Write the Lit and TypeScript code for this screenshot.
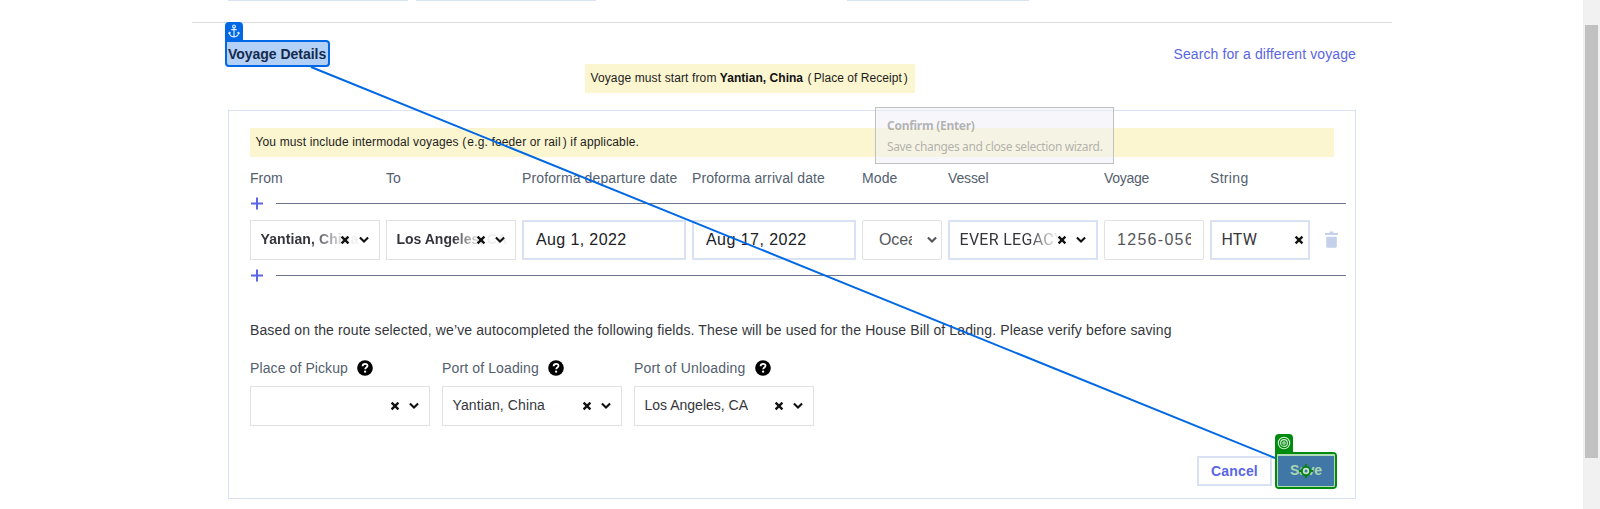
import { LitElement, html, css, svg, nothing } from "lit";
import { customElement } from "lit/decorators.js";

const ls = (n: number) => `letter-spacing:${n}px`;

const cross = html`<svg class="cross" width="10" height="10" viewBox="0 0 10 10"><path d="M1.6 1.6 8.4 8.4M8.4 1.6 1.6 8.4" fill="none" stroke="#111" stroke-width="2.3"/></svg>`;
const chevron = (color = "#111") => html`<svg class="chev" width="10" height="8" viewBox="0 0 10 8"><path d="M.9 1.6 5 5.6 9.1 1.6" fill="none" stroke=${color} stroke-width="2.1"/></svg>`;
const help = html`<svg class="help" width="16" height="16" viewBox="0 0 16 16"><circle cx="8" cy="8" r="7.8" fill="#000"/><path d="M5.6 6.2C5.7 4.5 6.8 3.8 8.1 3.8c1.4 0 2.4.8 2.4 2 0 1.7-2.3 1.8-2.3 3.4" fill="none" stroke="#fff" stroke-width="1.8"/><circle cx="8.1" cy="11.7" r="1.15" fill="#fff"/></svg>`;

interface Column { label: string; ls: number; }
const columns: Column[] = [
  { label: "From", ls: -0.04 },
  { label: "To", ls: 0 },
  { label: "Proforma departure date", ls: 0.129 },
  { label: "Proforma arrival date", ls: 0.109 },
  { label: "Mode", ls: 0.1 },
  { label: "Vessel", ls: -0.125 },
  { label: "Voyage", ls: -0.3 },
  { label: "String", ls: 0.32 },
];
const ports = [
  { label: "Place of Pickup", ls: 0.1, value: "", vls: 0 },
  { label: "Port of Loading", ls: 0.13, value: "Yantian, China", vls: 0.121 },
  { label: "Port of Unloading", ls: 0.195, value: "Los Angeles, CA", vls: 0 },
];

@customElement("app-root")
export class AppRoot extends LitElement {
  static styles = css`
    :host { display: block; font-family: "Liberation Sans", Arial, sans-serif; font-size: 14px; color: #35363c; }
    * { box-sizing: border-box; }
    .page { position: relative; display: flex; height: 509px; overflow: hidden; background: #fff; }
    .main { flex: 1; }
    .column { width: 1200px; margin-left: 192px; white-space: nowrap; }
    .edges { display: flex; height: 22px; padding-left: 36px; }
    .edges i { height: 1px; width: 180px; margin-right: 8px; background: #d9e2f4; }
    .edges i:last-child { margin-left: 243px; width: 182px; }
    .rule { height: 1px; background: #dcdcde; }
    .head { display: flex; justify-content: space-between; height: 24px; margin: 17px 36px 0 33px; line-height: 29px; }
    .title { position: relative; width: 105px; height: 27px; padding-left: 1px; line-height: 24px; border: 2px solid #0068e4; border-radius: 0 4px 4px 4px; background: #b3d1f7; color: #152a4c; font-weight: 700; }
    .tag { position: absolute; left: -2px; top: -20px; width: 18px; height: 18px; border-radius: 4px 4px 0 0; background: #0068e4; }
    .tag svg { display: block; margin: 0 auto; }
    .link { color: #5a66e3; }
    .notice { height: 29px; padding-left: 5.5px; line-height: 28px; font-size: 12px; color: #1d1d1d; background: #fbf6d0; }
    .notice b { color: #111; }
    .start { width: 330px; margin-left: 393px; }
    .open { margin: 0 2.2px 0 1px; }
    .tight { margin-right: 1px; margin-left: 0; }
    .close { margin-left: 2px; }
    .panel { width: 1128px; height: 389px; margin: 17px 0 0 36px; padding: 17px 21px 0; border: 1px solid #d9e2f4; }
    .legs { display: grid; grid-template-columns: 130px 130px 164px 164px 80px 150px 100px 100px 28px; column-gap: 6px; width: 1110px; }
    .labels { margin-top: 11px; line-height: 20px; color: #53606e; }
    .add { display: flex; align-items: center; gap: 13px; width: 1096px; height: 15px; padding-left: 1px; margin-top: 8px; }
    .add::after { content: ""; flex: 1; height: 1px; background: #6c768d; }
    .add svg { display: block; }
    .row { margin-top: 9px; }
    .field { display: flex; align-items: center; height: 40px; padding: 0 10px; border: 1px solid #e1e1e3; overflow: hidden; }
    .field .value { flex: 1; min-width: 0; overflow: hidden; margin-top: -2px; line-height: 24px; }
    .field.combo .cross { margin-left: 6px; }
    .cross, .chev, .help { display: block; flex: none; }
    .chev { margin-left: 9px; }
    .field.combo { padding-left: 9.5px; }
    .combo .value { width: 0; overflow: visible; }
    .bold { font-weight: 700; }
    .faded { display: block; width: 110px; overflow: hidden; }
    .fade-a { mask-image: linear-gradient(90deg, #000 50px, rgba(0,0,0,.08) 83px); }
    .fade-b { mask-image: linear-gradient(90deg, #000 56px, rgba(0,0,0,.08) 83px); }
    .fade-c { mask-image: linear-gradient(90deg, #000 68px, rgba(0,0,0,.06) 98px); }
    .blue { border: 2px solid #d9e2f4; font-size: 16px; }
    .date { padding-left: 12px; color: #202126; }
    .date .value, .big .value { margin-top: 0; }
    .big { font-size: 16px; }
    .blue.big { font-family: Roboto, "Liberation Sans", sans-serif; }
    .field.nochev { padding-right: 4px; }
    .native { border-radius: 2px; color: #55565b; padding: 0 4px 0 16px; }
    .native .value { flex: none; width: 33px; }
    .native .chev { margin-left: auto; }
    .plain { border-radius: 2px; color: #55565b; padding: 0 12px; }
    .trash { align-self: center; margin-left: 8px; margin-top: -1px; }
    .second { margin-top: 8px; }
    .info { margin-top: 37px; line-height: 20px; }
    .ports { display: grid; grid-template-columns: repeat(3, 180px); gap: 8px 12px; margin-top: 18px; }
    .caption { display: flex; align-items: center; height: 20px; color: #53606e; }
    .caption .help { margin-left: 9px; }
    .actions { display: flex; justify-content: flex-end; gap: 6px; height: 30px; margin: 30px -1px 0 0; }
    .cancel { width: 75px; height: 30px; border: 2px solid #d9e2f4; color: #5a66e3; font-weight: 700; line-height: 26px; text-align: center; }
    .save { position: relative; width: 57px; height: 30px; background: #4077a7; color: #a9d6b0; font-weight: 700; line-height: 29px; padding-left: 12px; }
    .target { position: absolute; left: -3px; top: -4px; width: 62px; height: 37px; border: 2px solid #008a0e; border-radius: 0 4px 4px 4px; }
    .target::before { content: ""; position: absolute; inset: 0; border: solid #b2dcb6; border-width: 2px 1px 1px; border-radius: 0 2px 2px 2px; }
    .target .tag { background: #008a0e; }
    .dot { position: absolute; left: 20px; top: 7px; }
    .line { position: absolute; left: 0; top: 0; pointer-events: none; }
    .tip { position: absolute; left: 875px; top: 107px; width: 239px; height: 57px; padding: 7px 11px; border: 1px solid #bfc0c2; background: rgba(240,240,247,.5); font: 12px/21px "Noto Sans", "Open Sans", sans-serif; color: rgba(120,120,120,.55); white-space: nowrap; }
    .tip b { display: block; color: rgba(120,120,120,.55); }
    .scroll { width: 17px; padding: 25px 2px 0; background: #f1f1f1; }
    .thumb { height: 433px; background: #c1c1c1; }
  `;

  private combo(value: string, spacing: number, extra = "", fade = "") {
    return html`<div class="field combo ${extra}"><span class="value" style=${ls(spacing)}>${fade ? html`<span class="faded ${fade}">${value}</span>` : value}</span>${cross}${extra.includes("nochev") ? nothing : chevron()}</div>`;
  }

  private add(extra = "") {
    return html`<div class="add ${extra}"><svg width="12" height="13" viewBox="0 0 12 13"><path d="M6 .5v12M0 6.5h12" stroke="#5a66e3" stroke-width="2"/></svg></div>`;
  }

  render() {
    return html`<div class="page">
      <div class="main"><div class="column">
        <div class="edges"><i></i><i></i><i></i></div>
        <div class="rule"></div>
        <div class="head">
          <div class="title"><span class="tag"><svg width="12" height="18" viewBox="0 0 12 18"><g fill="none" stroke="#dcebff" stroke-width="1.2"><circle cx="6" cy="4.4" r="1.4"/><path d="M6 6v9M3.2 7.7h5.6M1.2 10.2c.2 3 2.2 4.4 4.8 4.6 2.6-.2 4.6-1.6 4.8-4.6M.5 11.8l.8-1.5 1.4 1M11.5 11.8l-.8-1.5-1.4 1"/></g></svg></span><span style=${ls(-0.03)}>Voyage Details</span></div>
          <span class="link" style=${ls(0.103)}>Search for a different voyage</span>
        </div>
        <div class="notice start"><span style=${ls(0.119)}>Voyage must start from</span> <b style=${ls(0.04)}>Yantian, China</b> <span style=${ls(0.05)}><span class="open">(</span>Place of Receipt<span class="close">)</span></span></div>
        <div class="panel">
          <div class="notice" style=${ls(0.14)}>You must include intermodal voyages <span class="open tight">(</span>e.g. feeder or rail<span class="close">)</span> if applicable.</div>
          <div class="legs labels">${columns.map(c => html`<span style=${ls(c.ls)}>${c.label}</span>`)}</div>
          ${this.add()}
          <div class="legs row">
            ${this.combo("Yantian, China", 0.1, "bold", "fade-a")}
            ${this.combo("Los Angeles, CA", 0, "bold", "fade-b")}
            <div class="field blue date"><span class="value" style=${ls(0.38)}>Aug 1, 2022</span></div>
            <div class="field blue date"><span class="value" style=${ls(0.45)}>Aug 17, 2022</span></div>
            <div class="field native big"><span class="value" style=${ls(-0.1)}>Ocean</span>${chevron("#55565b")}</div>
            ${this.combo("EVER LEGACY", 0.29, "blue big", "fade-c")}
            <div class="field plain big"><span class="value" style=${ls(1.3)}>1256-056E</span></div>
            ${this.combo("HTW", 0.15, "blue big nochev")}
            <svg class="trash" width="15" height="19" viewBox="0 0 15 19"><path d="M1 3h4.5V1.6h4V3H14v2H1zM2.2 6.8h10.6v9.2c0 1-.6 1.8-1.7 1.8H3.9c-1.1 0-1.7-.8-1.7-1.800z" fill="#c5d1ea"/></svg>
          </div>
          ${this.add("second")}
          <div class="info" style=${ls(0.125)}>Based on the route selected, we’ve autocompleted the following fields. These will be used for the House Bill of Lading. Please verify before saving</div>
          <div class="ports">
            ${ports.map(p => html`<div class="caption"><span style=${ls(p.ls)}>${p.label}</span>${help}</div>`)}
            ${ports.map(p => this.combo(p.value, p.vls))}
          </div>
          <div class="actions">
            <div class="cancel" style=${ls(0.15)}>Cancel</div>
            <div class="save" style=${ls(-0.2)}>Save
              <div class="target"><span class="tag"><svg width="14" height="18" viewBox="0 0 14 18"><g fill="none" stroke="#d5f0d7" stroke-width="1.1"><circle cx="7" cy="9" r="5.7"/><circle cx="7" cy="9" r="3.4"/><circle cx="7" cy="9" r="1.2"/></g></svg></span></div>
              <svg class="dot" width="16" height="16" viewBox="0 0 16 16"><path d="M8 1v3M8 12v3M1 8h3M12 8h3" stroke="#087f18" stroke-width="2"/><circle cx="8" cy="8" r="4.2" fill="#c5e6ca" stroke="#087f18" stroke-width="2"/><circle cx="8" cy="8" r="1.5" fill="#4077a7"/></svg>
            </div>
          </div>
        </div>
      </div></div>
      <div class="scroll"><div class="thumb"></div></div>
      <svg class="line" width="1583" height="509">${svg`<path d="M311 67 1275 458" stroke="#0068e4" stroke-width="2"/>`}</svg>
      <div class="tip"><b style=${ls(-0.28)}>Confirm (Enter)</b><span style=${ls(-0.353)}>Save changes and close selection wizard.</span></div>
    </div>`;
  }
}
